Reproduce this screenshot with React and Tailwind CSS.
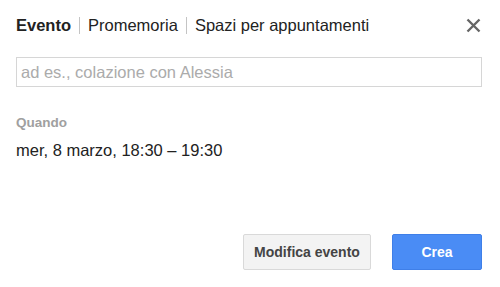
export default function App() {
  return (
    <div className="w-[500px] h-[287px] bg-white flex flex-col pl-[16px] pr-[18px] pt-[15px] font-['Liberation_Sans',Arial,sans-serif] text-[#222]">
      <div className="flex items-center h-[20px]">
        <span className="text-[16.5px] leading-[20px] font-bold text-[#222]">Evento</span>
        <span className="mx-[8px] w-px h-[17px] bg-[#c4c4c4]" />
        <span className="text-[16.5px] leading-[20px] text-[#222]">Promemoria</span>
        <span className="mx-[8px] w-px h-[17px] bg-[#c4c4c4]" />
        <span className="text-[16.5px] leading-[20px] text-[#222]">Spazi per appuntamenti</span>
        <button className="ml-auto mr-[1px] w-[16px] h-[16px] flex items-center justify-center">
          <svg width="15" height="15" viewBox="0 0 15 15">
            <path d="M1.5 1.5 L13.5 13.5 M13.5 1.5 L1.5 13.5" stroke="#666" strokeWidth="2.4" strokeLinecap="butt" fill="none" />
          </svg>
        </button>
      </div>

      <input
        className="mt-[22px] h-[30px] w-full border border-[#d6d6d6] px-[4px] text-[16.5px] text-[#222] placeholder:text-[#ababab] outline-none"
        placeholder="ad es., colazione con Alessia"
      />

      <div className="mt-[28px] text-[13.5px] leading-[16px] font-bold text-[#a0a0a0]">Quando</div>
      <div className="mt-[9px] text-[16.5px] leading-[20px] text-[#222]">mer, 8 marzo, 18:30 – 19:30</div>

      <div className="mt-[74px] flex justify-end gap-[21px]">
        <button className="w-[128px] h-[36px] rounded-[2px] border border-[#d9d9d9] bg-[#f3f3f3] text-[14px] font-bold text-[#444]">
          Modifica evento
        </button>
        <button className="w-[90px] h-[36px] rounded-[2px] border border-[#3f7fe8] bg-[#4a8cf5] text-[14px] font-bold text-white">
          Crea
        </button>
      </div>
    </div>
  );
}
